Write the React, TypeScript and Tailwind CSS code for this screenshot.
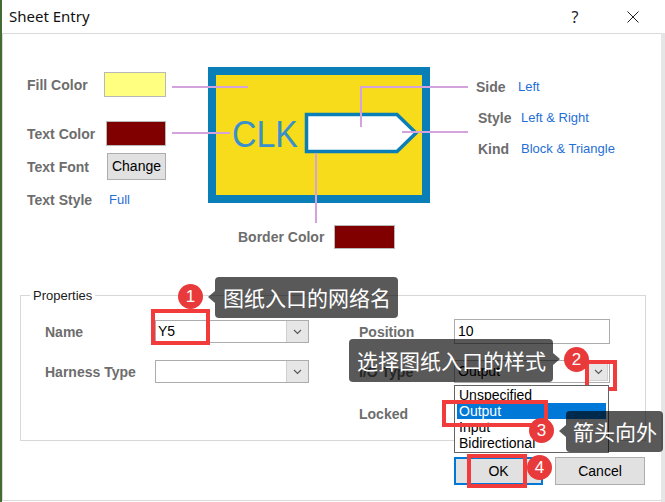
import React from "react";

const LABEL = "font-bold text-[14px] text-[#6d6d6d] leading-[18px] whitespace-nowrap";
const VALUE = "text-[13px] text-[#1f6fd6] leading-[18px] whitespace-nowrap";
const CJK = "font-['Noto_Sans_CJK_SC','Noto_Sans',sans-serif]";

function Chevron() {
  return (
    <svg width="9" height="6" viewBox="0 0 9 6">
      <path d="M1 1 L4.5 4.5 L8 1" fill="none" stroke="#555" strokeWidth="1.1" />
    </svg>
  );
}

function Badge({ n, className }: { n: string; className: string }) {
  return (
    <div
      className={
        "absolute rounded-full bg-[#e83a3a] text-white text-[17px] leading-none flex items-center justify-center " +
        className
      }
    >
      {n}
    </div>
  );
}

function RedBox({ className }: { className: string }) {
  return <div className={"absolute border-[4px] border-[#f23b3b] " + className} />;
}

export default function App() {
  return (
    <div className="w-[665px] h-[502px] flex bg-white relative overflow-hidden font-['Liberation_Sans',Arial,sans-serif] text-black">
      <div className="w-[2px] h-full bg-[#456b34]" />
      <div className="w-[659px] h-full flex flex-col">
        {/* Title bar */}
        <div className="h-[33px] flex items-center">
          <div className="ml-[7px] text-[15px] font-['Noto_Sans',sans-serif] text-[#111]">Sheet Entry</div>
          <div className="flex-1" />
          <div className="w-[46px] flex justify-center text-[16px] font-['Noto_Sans',sans-serif] text-[#222]">?</div>
          <div className="ml-[12px] w-[46px] flex justify-center">
            <svg width="12" height="12" viewBox="0 0 12 12">
              <path d="M0.5 0.5 L11.5 11.5 M11.5 0.5 L0.5 11.5" stroke="#222" strokeWidth="1" fill="none" />
            </svg>
          </div>
          <div className="w-[5px]" />
        </div>

        {/* Body */}
        <div className="h-[468px] border-t border-l border-b border-[#dadada] flex flex-col">
          {/* Top preview section */}
          <div className="flex items-start">
            {/* Left column */}
            <div className="ml-[24px] mt-[38px] w-[139px] flex flex-col">
              <div className="h-[25px] flex items-center justify-between">
                <span className={LABEL}>Fill Color</span>
                <div className="w-[62px] h-[25px] bg-[#ffff80] border border-[#b8b8b8]" />
              </div>
              <div className="mt-[24px] h-[25px] flex items-center justify-between">
                <span className={LABEL}>Text Color</span>
                <div className="w-[60px] h-[25px] bg-[#800000] border border-[#b8b8b8]" />
              </div>
              <div className="mt-[7px] h-[27px] flex items-center justify-between">
                <span className={LABEL}>Text Font</span>
                <div className="w-[59px] h-[27px] bg-[#e1e1e1] border border-[#adadad] flex items-center justify-center text-[14px] text-black">
                  Change
                </div>
              </div>
              <div className="mt-[11px] h-[18px] flex items-center">
                <span className={LABEL + " w-[82px]"}>Text Style</span>
                <span className={VALUE}>Full</span>
              </div>
            </div>

            {/* Middle column: diagram */}
            <div className="mt-[26px] w-[304px] flex flex-col">
              <svg width="304" height="165" viewBox="0 0 304 165">
                <rect x="42" y="7" width="222" height="136" fill="#0a7eb7" />
                <rect x="50" y="15" width="206" height="120" fill="#f6dc1a" />
                <text
                  x="66"
                  y="87"
                  fontSize="36"
                  fill="#3a8fcd"
                  fontFamily="Liberation Sans, Arial, sans-serif"
                  textLength="66"
                  lengthAdjust="spacingAndGlyphs"
                >
                  CLK
                </text>
                <polygon
                  points="140.5,54.5 231,54.5 250,73 231,91.5 140.5,91.5"
                  fill="#ffffff"
                  stroke="#0a7eb7"
                  strokeWidth="3.5"
                />
                <g stroke="#d4a2dc" strokeWidth="2" fill="none">
                  <path d="M6 27 L82 27" />
                  <path d="M6 73 L64 73" />
                  <path d="M195 67 L195 27 L302 27" />
                  <path d="M236 72 L302 72" />
                  <path d="M150 93 L150 163" />
                </g>
              </svg>
              <div className="h-[24px] pl-[72px] flex items-center gap-[10px]">
                <span className={LABEL}>Border Color</span>
                <div className="w-[61px] h-[24px] bg-[#800000] border border-[#b8b8b8]" />
              </div>
            </div>

            {/* Right column */}
            <div className="ml-[6px] mt-[44px] flex flex-col gap-[13px]">
              <div className="h-[18px] flex items-center">
                <span className={LABEL + " w-[42px]"}>Side</span>
                <span className={VALUE}>Left</span>
              </div>
              <div className="h-[18px] flex items-center ml-[2px]">
                <span className={LABEL + " w-[43px]"}>Style</span>
                <span className={VALUE}>Left &amp; Right</span>
              </div>
              <div className="h-[18px] flex items-center ml-[2px]">
                <span className={LABEL + " w-[43px]"}>Kind</span>
                <span className={VALUE}>Block &amp; Triangle</span>
              </div>
            </div>
          </div>

          {/* Properties group */}
          <div className="mt-[46px] ml-[17px] w-[626px] border border-[#d8d8d8] flex flex-col pb-[14px]">
            <div className="-mt-[8px] ml-[9px] px-[3px] bg-white w-fit text-[13px] leading-[15px] text-[#1a1a1a]">
              Properties
            </div>
            <div className="mt-[16px] pl-[24px] h-[25px] flex items-center">
              <span className={LABEL + " w-[110px]"}>Name</span>
              <div className="w-[154px] h-[23px] flex border border-[#acacac] bg-white">
                <div className="flex-1 pl-[2px] text-[14px] leading-[21px]">Y5</div>
                <div className="w-[22px] bg-[#e6e6e6] border-l border-[#cfcfcf] flex items-center justify-center">
                  <Chevron />
                </div>
              </div>
              <span className={LABEL + " ml-[50px] w-[95px]"}>Position</span>
              <div className="w-[156px] h-[25px] border border-[#acacac] pl-[3px] text-[14px] leading-[23px]">10</div>
            </div>
            <div className="mt-[16px] pl-[24px] h-[23px] flex items-center">
              <span className={LABEL + " w-[110px]"}>Harness Type</span>
              <div className="w-[154px] h-[23px] flex border border-[#acacac] bg-white">
                <div className="flex-1" />
                <div className="w-[22px] bg-[#e6e6e6] border-l border-[#cfcfcf] flex items-center justify-center">
                  <Chevron />
                </div>
              </div>
              <span className={LABEL + " ml-[50px] w-[95px]"}>I/O Type</span>
              <div className="relative w-[156px] h-[23px] flex border border-[#acacac] bg-white">
                <div className="flex-1 pl-[3px] text-[14px] leading-[21px]">Output</div>
                <div className="w-[20px] mr-[1px] my-[1px] bg-[#e6e6e6] border border-[#cfcfcf] flex items-center justify-center">
                  <Chevron />
                </div>
                <div className="absolute left-[-1px] top-[24px] w-[155px] border border-[#646464] bg-white py-[1px] flex flex-col text-[14px] leading-[16px] z-10">
                  <div className="h-[16px] mx-[2px] pl-[2px]">Unspecified</div>
                  <div className="h-[16px] mx-[2px] pl-[2px] bg-[#0078d7] text-white">Output</div>
                  <div className="h-[16px] mx-[2px] pl-[2px]">Input</div>
                  <div className="h-[16px] mx-[2px] pl-[2px]">Bidirectional</div>
                </div>
              </div>
            </div>
            <div className="mt-[18px] pl-[338px] h-[25px] flex items-center">
              <span className={LABEL}>Locked</span>
            </div>
          </div>

          {/* Buttons */}
          <div className="mt-[16px] flex justify-end gap-[12px] pr-[16px]">
            <div className="w-[89px] h-[28px] border-2 border-[#0078d7] bg-[#e1e1e1] flex items-center justify-center text-[14px]">
              OK
            </div>
            <div className="w-[90px] h-[28px] border border-[#adadad] bg-[#e1e1e1] flex items-center justify-center text-[14px]">
              Cancel
            </div>
          </div>
        </div>
      </div>
      <div className="w-[4px] h-full flex flex-col">
        <div className="h-[33px] bg-white" />
        <div className="flex-1 bg-[#e6e6e6]" />
      </div>

      {/* Annotations */}
      <RedBox className="left-[151px] top-[309px] w-[59px] h-[36px]" />
      <RedBox className="left-[585px] top-[360px] w-[32px] h-[31px]" />
      <RedBox className="left-[442px] top-[400px] w-[106px] h-[27px] z-20" />
      <RedBox className="left-[467px] top-[454px] w-[60px] h-[34px]" />

      <div className={"absolute left-[215px] top-[277px] w-[183px] h-[41px] rounded-[4px] bg-black/65 text-white text-[21px] leading-none pl-[8px] flex items-center z-30 " + CJK}>
        <div className="absolute left-[-7px] top-[14px] w-0 h-0 border-y-[6px] border-y-transparent border-r-[7px] border-r-black/65" />
        图纸入口的网络名
      </div>
      <div className={"absolute left-[349px] top-[339px] w-[204px] h-[43px] rounded-[4px] bg-black/65 text-white text-[21px] leading-none pl-[8px] flex items-center z-30 " + CJK}>
        <div className="absolute right-[-7px] top-[14px] w-0 h-0 border-y-[6px] border-y-transparent border-l-[7px] border-l-black/65" />
        选择图纸入口的样式
      </div>
      <div className={"absolute left-[566px] top-[411px] w-[97px] h-[41px] rounded-[4px] bg-black/65 text-white text-[21px] leading-none pl-[7px] flex items-center z-30 " + CJK}>
        <div className="absolute left-[-7px] top-[14px] w-0 h-0 border-y-[6px] border-y-transparent border-r-[7px] border-r-black/65" />
        箭头向外
      </div>

      <Badge n="1" className="left-[178px] top-[284px] w-[25px] h-[25px] z-40" />
      <Badge n="2" className="left-[564px] top-[347px] w-[25px] h-[25px] z-40" />
      <Badge n="3" className="left-[529px] top-[418px] w-[25px] h-[25px] z-40" />
      <Badge n="4" className="left-[527px] top-[455px] w-[25px] h-[25px] z-40" />
    </div>
  );
}
